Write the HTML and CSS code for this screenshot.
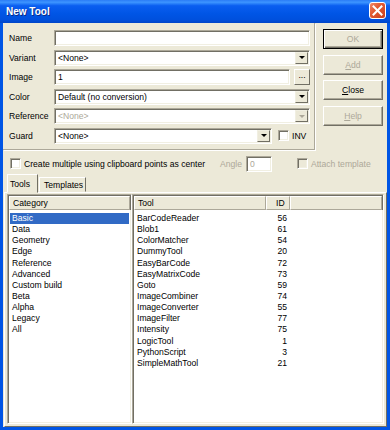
FILE: index.html
```html
<!DOCTYPE html>
<html>
<head>
    <title>New Tool</title>
    <link rel="stylesheet" href="styles.css">
</head>
<body>
    <div class="window">
        <div class="titlebar">
            <span class="title">New Tool</span>
            <span class="close-box">
                <svg width="11" height="11" viewBox="0 0 11 11">
                    <path d="M1.5 1.5 L9.5 9.5 M9.5 1.5 L1.5 9.5" stroke="#fff" stroke-width="2" stroke-linecap="square"/>
                </svg>
            </span>
        </div>
        <div class="client">
            <div class="top">
                <div class="fields">
                    <div class="row">
                        <label>Name</label>
                        <div class="edit"></div>
                    </div>
                    <div class="row">
                        <label>Variant</label>
                        <div class="edit combo"><span class="val">&lt;None&gt;</span><span class="drop"><i></i></span></div>
                    </div>
                    <div class="row">
                        <label>Image</label>
                        <div class="edit"><span class="val">1</span></div>
                        <span class="dots">...</span>
                    </div>
                    <div class="row">
                        <label>Color</label>
                        <div class="edit combo"><span class="val">Default (no conversion)</span><span class="drop"><i></i></span></div>
                    </div>
                    <div class="row">
                        <label>Reference</label>
                        <div class="edit combo disabled"><span class="val">&lt;None&gt;</span><span class="drop"><i></i></span></div>
                    </div>
                    <div class="row">
                        <label>Guard</label>
                        <div class="edit combo guard"><span class="val">&lt;None&gt;</span><span class="drop"><i></i></span></div>
                        <span class="check"></span>
                        <span class="check-text">INV</span>
                    </div>
                </div>
                <div class="buttons">
                    <div class="btn default grey">OK</div>
                    <div class="btn grey"><u>A</u>dd</div>
                    <div class="btn"><u>C</u>lose</div>
                    <div class="btn grey"><u>H</u>elp</div>
                </div>
            </div>

            <div class="options">
                <div class="opt-main">
                    <span class="check"></span>
                    <span>Create multiple using clipboard points as center</span>
                </div>
                <span class="grey-text">Angle</span>
                <div class="edit angle"><span class="val grey-text">0</span></div>
                <span class="check disabled attach"></span>
                <span class="grey-text">Attach template</span>
            </div>

            <div class="tabs">
                <div class="tab active">Tools</div>
                <div class="tab">Templates</div>
            </div>

            <div class="pane">
                <div class="list cat-list">
                    <div class="hdr"><span class="hcell cat-col">Category</span></div>
                    <div class="items">
                        <div class="item sel">Basic</div>
                        <div class="item">Data</div>
                        <div class="item">Geometry</div>
                        <div class="item">Edge</div>
                        <div class="item">Reference</div>
                        <div class="item">Advanced</div>
                        <div class="item">Custom build</div>
                        <div class="item">Beta</div>
                        <div class="item">Alpha</div>
                        <div class="item">Legacy</div>
                        <div class="item">All</div>
                    </div>
                </div>
                <div class="list tool-list">
                    <div class="hdr">
                        <span class="hcell tool-col">Tool</span>
                        <span class="hcell id-col">ID</span>
                        <span class="hcell rest-col"></span>
                    </div>
                    <div class="items">
                        <div class="trow"><span class="tool-col">BarCodeReader</span><span class="id-col">56</span></div>
                        <div class="trow"><span class="tool-col">Blob1</span><span class="id-col">61</span></div>
                        <div class="trow"><span class="tool-col">ColorMatcher</span><span class="id-col">54</span></div>
                        <div class="trow"><span class="tool-col">DummyTool</span><span class="id-col">20</span></div>
                        <div class="trow"><span class="tool-col">EasyBarCode</span><span class="id-col">72</span></div>
                        <div class="trow"><span class="tool-col">EasyMatrixCode</span><span class="id-col">73</span></div>
                        <div class="trow"><span class="tool-col">Goto</span><span class="id-col">59</span></div>
                        <div class="trow"><span class="tool-col">ImageCombiner</span><span class="id-col">74</span></div>
                        <div class="trow"><span class="tool-col">ImageConverter</span><span class="id-col">55</span></div>
                        <div class="trow"><span class="tool-col">ImageFilter</span><span class="id-col">77</span></div>
                        <div class="trow"><span class="tool-col">Intensity</span><span class="id-col">75</span></div>
                        <div class="trow"><span class="tool-col">LogicTool</span><span class="id-col">1</span></div>
                        <div class="trow"><span class="tool-col">PythonScript</span><span class="id-col">3</span></div>
                        <div class="trow"><span class="tool-col">SimpleMathTool</span><span class="id-col">21</span></div>
                    </div>
                </div>
            </div>
        </div>
    </div>
</body>
</html>
```

FILE: styles.css
```css
body {
    margin: 0;
    font-family: 'Liberation Sans', Arial, sans-serif;
    font-size: 8.6px;
    color: #000;
    background: #fff;
}
.window {
    width: 390px;
    height: 430px;
    box-sizing: border-box;
    background: #0055e5;
    padding-bottom: 3px;
    display: flex;
    flex-direction: column;
}
.titlebar {
    height: 23px;
    flex: none;
    display: flex;
    align-items: center;
    justify-content: space-between;
    padding: 0 4px 0 6px;
    background: linear-gradient(#2b7cf6 0%, #3d95ff 10%, #0a5ef0 25%, #0055e5 60%, #0050dd 85%, #0045c8 100%);
}
.title {
    color: #fff;
    font-weight: bold;
    font-size: 10px;
    text-shadow: 1px 1px 0 #0a2c88;
}
.close-box {
    width: 15px;
    height: 15px;
    border: 1px solid #fff;
    border-radius: 3px;
    background: linear-gradient(135deg, #f0896a 0%, #e25a33 40%, #c8401d 100%);
    display: flex;
    align-items: center;
    justify-content: center;
    margin-top: -2px;
}
.client {
    flex: 1;
    margin: 0 3px;
    background: #ece9d8;
    display: flex;
    flex-direction: column;
}

/* upper part */
.top {
    display: flex;
    height: 127px;
    flex: none;
}
.fields {
    width: 312px;
    box-sizing: border-box;
    padding: 7px 4px 0 6px;
    border-right: 1px solid #aca899;
    border-bottom: 1px solid #aca899;
    box-shadow: 1px 1px 0 #fff;
    display: flex;
    flex-direction: column;
    gap: 3.5px;
}
.row {
    display: flex;
    align-items: center;
    height: 16px;
}
.row label {
    width: 45px;
    flex: none;
}
.edit {
    flex: 1;
    height: 16px;
    box-sizing: border-box;
    background: #fff;
    border: 1px solid;
    border-color: #aca899 #fff #fff #aca899;
    box-shadow: inset 1px 1px 0 #716f64, inset -1px -1px 0 #f1efe2;
    display: flex;
    align-items: center;
    padding-left: 3px;
    overflow: hidden;
}
.edit .val {
    flex: 1;
    white-space: nowrap;
}
.combo {
    padding-right: 1px;
}
.drop {
    width: 13px;
    height: 12px;
    box-sizing: border-box;
    background: #ece9d8;
    border: 1px solid;
    border-color: #f1efe2 #716f64 #716f64 #f1efe2;
    display: flex;
    align-items: center;
    justify-content: center;
}
.drop i {
    width: 0;
    height: 0;
    border-left: 3px solid transparent;
    border-right: 3px solid transparent;
    border-top: 3px solid #000;
}
.disabled .val {
    color: #aca899;
}
.disabled .drop i {
    border-top-color: #aca899;
}
.guard {
    flex: none;
    width: 218px;
}
.dots {
    width: 16px;
    height: 16px;
    box-sizing: border-box;
    margin-left: 4px;
    background: #ece9d8;
    border: 1px solid;
    border-color: #fff #716f64 #716f64 #fff;
    text-align: center;
    line-height: 10px;
}
.check {
    width: 11px;
    height: 11px;
    box-sizing: border-box;
    flex: none;
    background: #fff;
    border: 1px solid;
    border-color: #aca899 #fff #fff #aca899;
    box-shadow: inset 1px 1px 0 #716f64, inset -1px -1px 0 #f1efe2;
}
.check.disabled {
    background: #ece9d8;
}
.row .check {
    margin-left: 6px;
}
.check-text {
    margin-left: 3px;
}

.buttons {
    margin-left: 8px;
    padding-top: 6px;
    display: flex;
    flex-direction: column;
    gap: 5.7px;
}
.btn {
    width: 60px;
    height: 20px;
    box-sizing: border-box;
    border: 1px solid;
    border-color: #fff #716f64 #716f64 #fff;
    box-shadow: inset -1px -1px 0 #aca899;
    display: flex;
    align-items: center;
    justify-content: center;
}
.btn.default {
    border: 1px solid #000;
    box-shadow: inset 1px 1px 0 #fff, inset -1px -1px 0 #716f64, inset -2px -2px 0 #aca899;
}
.grey, .grey-text {
    color: #aca899;
}
.btn.grey u {
    text-decoration-color: #aca899;
}

/* options row */
.options {
    height: 24px;
    flex: none;
    display: flex;
    align-items: center;
    padding: 3px 0 0 7px;
    box-sizing: border-box;
}
.opt-main {
    width: 210px;
    display: flex;
    align-items: center;
    gap: 3px;
}
.angle {
    flex: none;
    width: 26px;
    margin-left: 4px;
}
.attach {
    margin: 0 3px 0 25px;
}

/* tabs */
.tabs {
    display: flex;
    align-items: flex-end;
    padding-left: 4px;
    height: 18px;
    flex: none;
    position: relative;
    z-index: 1;
}
.tab {
    height: 15px;
    box-sizing: border-box;
    padding: 0 4px;
    border: 1px solid;
    border-color: #fff #716f64 transparent #fff;
    display: flex;
    align-items: center;
}
.tab.active {
    height: 19px;
    margin-bottom: -1px;
    width: 31px;
    padding: 0 2px;
    background: #ece9d8;
}
.tab + .tab {
    margin-left: 1px;
    width: 47px;
}

.pane {
    flex: 1;
    margin-left: 1px;
    border: 1px solid;
    border-color: #fff #716f64 #716f64 #fff;
    padding: 1px 2px 2px 2px;
    display: flex;
}
.list {
    background: #fff;
    border: 1px solid;
    border-color: #aca899 #fff #fff #aca899;
    box-shadow: inset 1px 1px 0 #716f64, inset -1px -1px 0 #f1efe2;
    padding: 1px;
    display: flex;
    flex-direction: column;
}
.cat-list {
    width: 125px;
    box-sizing: border-box;
}
.tool-list {
    flex: 1;
}
.hdr {
    display: flex;
    height: 14px;
    flex: none;
}
.hcell {
    box-sizing: border-box;
    height: 14px;
    background: #ece9d8;
    border: 1px solid;
    border-color: #fff #aca899 #aca899 #fff;
    box-shadow: 1px 0 0 #716f64;
    display: flex;
    align-items: center;
    padding-left: 3px;
}
.cat-col {
    flex: 1;
}
.hcell.tool-col {
    width: 132px;
}
.hcell.id-col {
    width: 24px;
    padding-left: 9px;
}
.hcell.rest-col {
    flex: 1;
}
.items {
    padding-top: 3px;
}
.item {
    height: 11.15px;
    line-height: 11.15px;
    padding-left: 2px;
    margin: 0 1px;
}
.item.sel {
    background: #316ac5;
    color: #fff;
}
.trow {
    display: flex;
    height: 11.15px;
    line-height: 11.15px;
}
.trow .tool-col {
    width: 132px;
    padding-left: 3px;
    box-sizing: border-box;
}
.trow .id-col {
    width: 21px;
    text-align: right;
}
```
